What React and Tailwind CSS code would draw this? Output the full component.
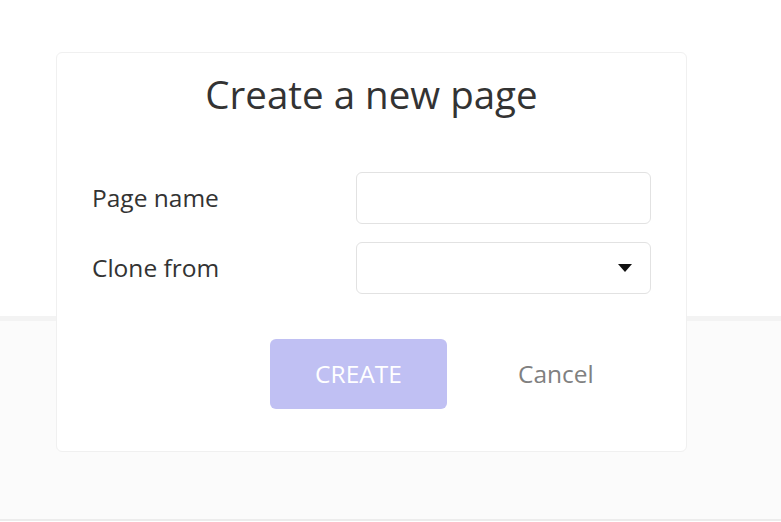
import React from 'react';

const App = () => {
  return (
    <div className="relative h-[522px] w-[781px] overflow-hidden bg-white" style={{ fontFamily: '"Open Sans", sans-serif' }}>
      {/* page behind the dialog */}
      <div className="flex h-full flex-col">
        <div className="h-[316px] bg-white" />
        <div className="h-[5px] bg-[#f3f3f3]" />
        <div className="h-[198px] bg-[#fbfbfb]" />
        <div className="h-[2px] bg-[#ececec]" />
        <div className="flex-1 bg-white" />
      </div>

      {/* dialog */}
      <div className="absolute left-[56px] top-[52px] flex h-[400px] w-[631px] flex-col rounded-md border border-[#f0f0f0] bg-white">
        <h1 className="mt-[16px] text-center text-[38.5px] leading-[50px] text-[#333]">Create a new page</h1>

        <div className="mt-[53px] flex flex-col gap-[18px] pl-[35px] pr-[35px]">
          <div className="flex items-center justify-between">
            <label className="text-[24.5px] leading-[30px] text-[#333]">Page name</label>
            <input className="h-[52px] w-[295px] rounded-md border border-[#e2e2e2] px-3 outline-none" />
          </div>
          <div className="flex items-center justify-between">
            <label className="text-[24.5px] leading-[30px] text-[#333]">Clone from</label>
            <div className="flex h-[52px] w-[295px] items-center justify-end rounded-md border border-[#e2e2e2] pr-[18px]">
              <svg width="14" height="8" viewBox="0 0 14 8">
                <path d="M0 0 H14 L7 8 Z" fill="#111" />
              </svg>
            </div>
          </div>
        </div>

        <div className="mt-[45px] flex items-center pl-[213px]">
          <button className="h-[70px] w-[177px] rounded-md bg-[#c0c0f3] text-[24.5px] text-white">CREATE</button>
          <button className="ml-[71px] text-[24.5px] text-[#808080]">Cancel</button>
        </div>
      </div>
    </div>
  );
};

export default App;
